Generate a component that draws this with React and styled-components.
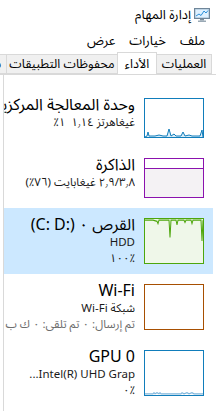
import React from "react";
import styled, { createGlobalStyle } from "styled-components";

const GlobalStyle = createGlobalStyle`
  html, body {
    margin: 0;
    padding: 0;
    background: #fff;
  }
  body {
    font-family: "Segoe UI", "Noto Sans", "Noto Sans Arabic", "DejaVu Sans", sans-serif;
    color: #000;
  }
`;

const Window = styled.div`
  width: 216px;
  height: 411px;
  overflow: hidden;
  direction: rtl;
  display: flex;
  flex-direction: column;
  background: #fff;
`;

const TitleBar = styled.div`
  height: 30px;
  display: flex;
  align-items: center;
  gap: 3px;
  padding-right: 6px;
  font-size: 13px;
`;

const MenuBar = styled.div`
  height: 20px;
  display: flex;
  align-items: center;
  gap: 14px;
  padding-right: 11px;
  font-size: 13px;
`;

const MenuItem = styled.span`
  line-height: 20px;
`;

const TabStrip = styled.div`
  margin-top: 1px;
  height: 23px;
  display: flex;
  align-items: flex-end;
  padding-right: 4px;
  border-bottom: 1px solid #d9d9d9;
  overflow: hidden;
`;

const Tab = styled.div`
  flex-shrink: 0;
  width: ${(p) => (p.$w ? `${p.$w}px` : "auto")};
  height: ${(p) => (p.$active ? "23px" : "20px")};
  margin-bottom: ${(p) => (p.$active ? "-1px" : "0")};
  margin-left: -1px;
  padding: 0 5px;
  display: flex;
  align-items: center;
  justify-content: center;
  font-size: 12.5px;
  background: ${(p) => (p.$active ? "#fff" : "#f0f0f0")};
  border: 1px solid #d9d9d9;
  border-bottom: ${(p) => (p.$active ? "none" : "1px solid #d9d9d9")};
  box-sizing: border-box;
  position: relative;
  z-index: ${(p) => (p.$active ? 1 : 0)};
  white-space: nowrap;
`;

const Panel = styled.div`
  flex: 1;
  margin-left: 3px;
  margin-right: 4px;
  border-left: 1px solid #d9d9d9;
  padding-top: 13px;
  display: flex;
  flex-direction: column;
`;

const Row = styled.div`
  display: flex;
  align-items: flex-start;
  gap: 9px;
  padding: 10px 9px 10px 0;
  margin-right: -1px;
  background: ${(p) => (p.$selected ? "#cce8ff" : "transparent")};
`;

const Graph = styled.div`
  flex-shrink: 0;
  width: 60px;
  height: ${(p) => p.$h}px;
  box-sizing: border-box;
  border: 1px solid ${(p) => p.$color};
  background: ${(p) => p.$fill || "#fff"};
  display: flex;
  flex-direction: column;
`;

const MemTop = styled.div`
  height: 9px;
  background: #fff;
  border-bottom: 1px solid #8b12ae;
`;

const Info = styled.div`
  flex: 1;
  min-width: 0;
  overflow: hidden;
  margin-top: -3px;
  margin-bottom: -4px;
`;

const Name = styled.div`
  font-size: 16px;
  line-height: 19px;
  white-space: nowrap;
`;

const Detail = styled.div`
  font-size: 11.5px;
  line-height: 16px;
  white-space: nowrap;
  direction: ${(p) => (p.$ltr ? "ltr" : "rtl")};
  text-align: right;
  color: ${(p) => (p.$muted ? "#6d6d6d" : "#1a1a1a")};
`;

const AppIcon = () => (
  <svg width="16" height="14" viewBox="0 0 16 14">
    <rect x="0.5" y="0.5" width="15" height="10" fill="#9fb8cc" stroke="#6f8699" />
    <rect x="1.5" y="1.5" width="13" height="8" fill="#dff1ff" />
    <polyline points="2,8 5,6 7,7.5 10,3 12,5 14,2.5" fill="none" stroke="#2a8fd8" strokeWidth="1" />
    <rect x="6" y="11" width="4" height="1.5" fill="#7d8f9e" />
    <rect x="4" y="12.5" width="8" height="1.5" fill="#9aa9b5" />
  </svg>
);

const Spark = ({ points, color, fill }) => (
  <svg width="58" height="100%" viewBox="0 0 58 38" preserveAspectRatio="none" style={{ display: "block" }}>
    <polyline points={points} fill={fill || "none"} stroke={color} strokeWidth="1" />
  </svg>
);

export default function App() {
  return (
    <>
      <GlobalStyle />
      <Window>
        <TitleBar>
          <AppIcon />
          <span>إدارة المهام</span>
        </TitleBar>
        <MenuBar>
          <MenuItem>ملف</MenuItem>
          <MenuItem>خيارات</MenuItem>
          <MenuItem>عرض</MenuItem>
        </MenuBar>
        <TabStrip>
          <Tab $w={56}>العمليات</Tab>
          <Tab $w={40} $active>الأداء</Tab>
          <Tab $w={112}>محفوظات التطبيقات</Tab>
          <Tab>بدء التشغيل</Tab>
        </TabStrip>
        <Panel>
          <Row>
            <Graph $h={40} $color="#117dbb">
              <Spark
                color="#117dbb"
                fill="#d9ecf7"
                points="0,38 2,37 3,33 4,37 10,37 14,36 18,37 22,37 24,30 26,37 29,35 31,37 36,37 38,33 40,37 44,36 47,37 52,37 55,37 57,31 58,38"
              />
            </Graph>
            <Info>
              <Name>وحدة المعالجة المركزية</Name>
              <Detail $ltr>
                <bdi dir="ltr">٪١</bdi>&nbsp;&nbsp;<bdi dir="ltr">١٫١٤</bdi> <bdi dir="rtl">غيغاهرتز</bdi>
              </Detail>
            </Info>
          </Row>
          <Row>
            <Graph $h={40} $color="#8b12ae" $fill="#f4f2f4">
              <MemTop />
            </Graph>
            <Info>
              <Name>الذاكرة</Name>
              <Detail>٢٫٩/٣٫٨ غيغابايت (٧٦٪)</Detail>
            </Info>
          </Row>
          <Row $selected>
            <Graph $h={46} $color="#4da60c" $fill="#eff7e9">
              <Spark
                color="#4da60c"
                points="0,1 8,1 12,2 13,4 14,1 24,1 25,16 26,1 31,1 32,5 33,1 39,1 40,3 41,1 46,1 47,4 48,1 56,1 57,19 58,1"
              />
            </Graph>
            <Info>
              <Name>
                القرص ٠ <bdi dir="ltr">(C: D:)</bdi>
              </Name>
              <Detail>HDD</Detail>
              <Detail>٪١٠٠</Detail>
            </Info>
          </Row>
          <Row>
            <Graph $h={46} $color="#a74f01" />
            <Info>
              <Name>Wi-Fi</Name>
              <Detail>شبكة Wi-Fi</Detail>
              <Detail $muted>تم إرسال: ٠ تم تلقي: ٠ ك ب ث</Detail>
            </Info>
          </Row>
          <Row>
            <Graph $h={46} $color="#117dbb">
              <Spark
                color="#7fb6dc"
                points="0,37 8,37 9,36 10,37 12,36 14,37 15,36 16,37 36,37 37,36 39,37 42,36 44,37 47,36 49,37 58,37"
              />
            </Graph>
            <Info>
              <Name>GPU 0</Name>
              <Detail>Intel(R) UHD Grap...</Detail>
              <Detail>٪٠</Detail>
            </Info>
          </Row>
        </Panel>
      </Window>
    </>
  );
}
